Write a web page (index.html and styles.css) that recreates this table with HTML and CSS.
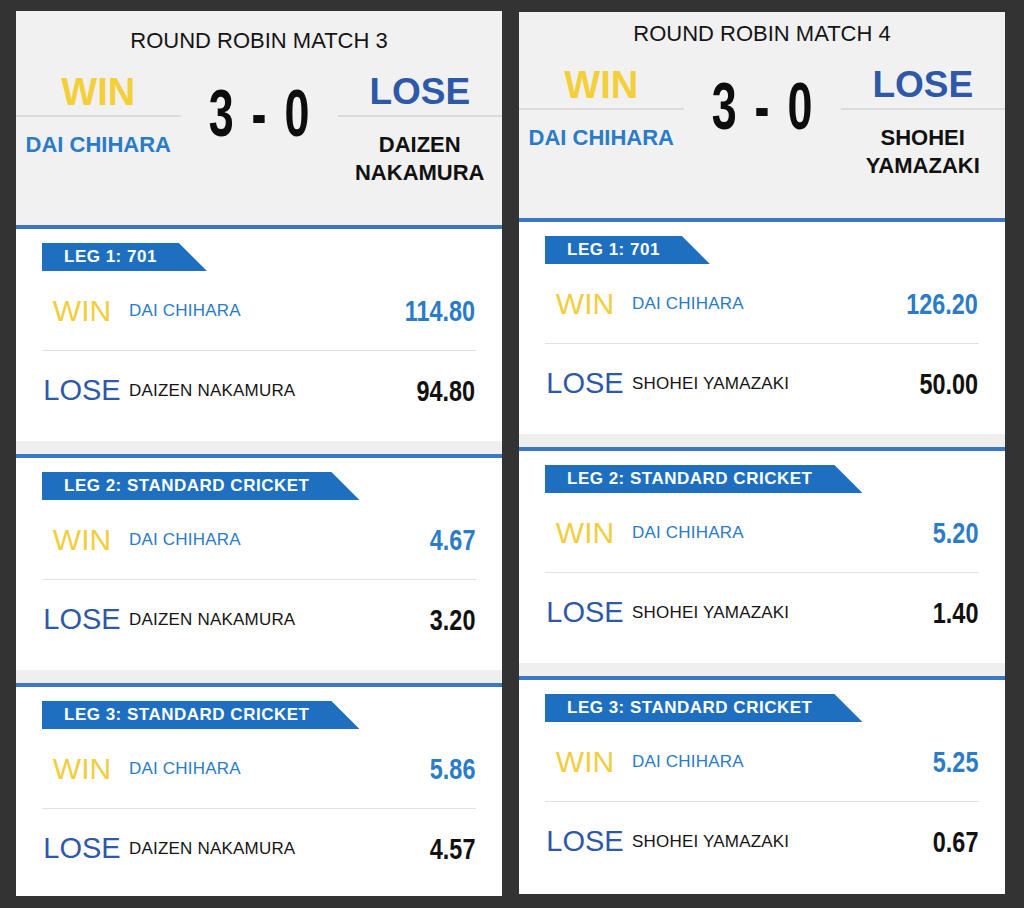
FILE: index.html
```html
<!DOCTYPE html>
<html lang="en">
<head>
<meta charset="utf-8">
<title>Round Robin Results</title>
<link rel="stylesheet" href="styles.css">
</head>
<body>
<main class="page">
  <section class="panel panel-a">
    <header class="match-head">
      <h1 class="match-title">ROUND ROBIN MATCH 3</h1>
      <div class="score-grid">
        <div class="side">
          <div class="result result-win">WIN</div>
          <div class="player player-win">DAI CHIHARA</div>
        </div>
        <div class="score"><span class="score-num">3 - 0</span></div>
        <div class="side">
          <div class="result result-lose">LOSE</div>
          <div class="player player-lose">DAIZEN NAKAMURA</div>
        </div>
      </div>
    </header>
    <article class="leg">
      <div class="leg-tag">LEG 1: 701</div>
      <div class="row">
        <span class="label label-win">WIN</span>
        <span class="name name-win">DAI CHIHARA</span>
        <span class="stat stat-win">114.80</span>
      </div>
      <div class="row">
        <span class="label label-lose">LOSE</span>
        <span class="name name-lose">DAIZEN NAKAMURA</span>
        <span class="stat stat-lose">94.80</span>
      </div>
    </article>
    <article class="leg">
      <div class="leg-tag">LEG 2: STANDARD CRICKET</div>
      <div class="row">
        <span class="label label-win">WIN</span>
        <span class="name name-win">DAI CHIHARA</span>
        <span class="stat stat-win">4.67</span>
      </div>
      <div class="row">
        <span class="label label-lose">LOSE</span>
        <span class="name name-lose">DAIZEN NAKAMURA</span>
        <span class="stat stat-lose">3.20</span>
      </div>
    </article>
    <article class="leg leg-last">
      <div class="leg-tag">LEG 3: STANDARD CRICKET</div>
      <div class="row">
        <span class="label label-win">WIN</span>
        <span class="name name-win">DAI CHIHARA</span>
        <span class="stat stat-win">5.86</span>
      </div>
      <div class="row">
        <span class="label label-lose">LOSE</span>
        <span class="name name-lose">DAIZEN NAKAMURA</span>
        <span class="stat stat-lose">4.57</span>
      </div>
    </article>
  </section>

  <section class="panel panel-b">
    <header class="match-head">
      <h1 class="match-title">ROUND ROBIN MATCH 4</h1>
      <div class="score-grid">
        <div class="side">
          <div class="result result-win">WIN</div>
          <div class="player player-win">DAI CHIHARA</div>
        </div>
        <div class="score"><span class="score-num">3 - 0</span></div>
        <div class="side">
          <div class="result result-lose">LOSE</div>
          <div class="player player-lose">SHOHEI YAMAZAKI</div>
        </div>
      </div>
    </header>
    <article class="leg">
      <div class="leg-tag">LEG 1: 701</div>
      <div class="row">
        <span class="label label-win">WIN</span>
        <span class="name name-win">DAI CHIHARA</span>
        <span class="stat stat-win">126.20</span>
      </div>
      <div class="row">
        <span class="label label-lose">LOSE</span>
        <span class="name name-lose">SHOHEI YAMAZAKI</span>
        <span class="stat stat-lose">50.00</span>
      </div>
    </article>
    <article class="leg">
      <div class="leg-tag">LEG 2: STANDARD CRICKET</div>
      <div class="row">
        <span class="label label-win">WIN</span>
        <span class="name name-win">DAI CHIHARA</span>
        <span class="stat stat-win">5.20</span>
      </div>
      <div class="row">
        <span class="label label-lose">LOSE</span>
        <span class="name name-lose">SHOHEI YAMAZAKI</span>
        <span class="stat stat-lose">1.40</span>
      </div>
    </article>
    <article class="leg leg-last">
      <div class="leg-tag">LEG 3: STANDARD CRICKET</div>
      <div class="row">
        <span class="label label-win">WIN</span>
        <span class="name name-win">DAI CHIHARA</span>
        <span class="stat stat-win">5.25</span>
      </div>
      <div class="row">
        <span class="label label-lose">LOSE</span>
        <span class="name name-lose">SHOHEI YAMAZAKI</span>
        <span class="stat stat-lose">0.67</span>
      </div>
    </article>
  </section>
</main>
</body>
</html>
```

FILE: styles.css
```css
* {
  box-sizing: border-box;
}

html, body {
  margin: 0;
  padding: 0;
  background: #333333;
  font-family: "Liberation Sans", Arial, sans-serif;
  color: #111111;
}

.page {
  display: flex;
  align-items: flex-start;
  gap: 17px;
  padding-left: 16px;
  width: 1024px;
  height: 908px;
  overflow: hidden;
}

.panel {
  width: 486px;
  display: flex;
  flex-direction: column;
  background: #efefef;
  overflow: hidden;
}

.panel-a {
  margin-top: 11px;
  height: 885px;
}

.panel-b {
  margin-top: 12px;
  height: 882px;
}

/* ---------- header ---------- */
.match-head {
  background: #f1f1f1;
  padding-bottom: 38px;
  flex: none;
}

.panel-a .match-head {
  padding-top: 17px;
}

.panel-b .match-head {
  padding-top: 9px;
}

.match-title {
  margin: 0 0 16px;
  font-size: 22px;
  line-height: 26px;
  font-weight: 400;
  text-align: center;
  color: #151515;
}

.score-grid {
  display: grid;
  grid-template-columns: 1fr 157px 1fr;
  align-items: start;
}

.side {
  text-align: center;
}

.result {
  font-size: 38px;
  line-height: 44px;
  font-weight: 700;
  padding-bottom: 1px;
  border-bottom: 2px solid #dcdcdc;
}

.result-win {
  color: #f3cf3a;
}

.result-lose {
  color: #2e58a8;
  font-size: 37px;
}

.player {
  margin-top: 14px;
  font-size: 22px;
  line-height: 28px;
  font-weight: 700;
}

.player-win {
  color: #2a7bc8;
}

.player-lose {
  color: #111111;
  padding: 0 4px;
}

.score {
  text-align: center;
  margin-top: 10px;
}

.score-num {
  display: inline-block;
  font-size: 66px;
  line-height: 66px;
  font-weight: 700;
  letter-spacing: 4px;
  padding-left: 4px;
  color: #0d0d0d;
  transform: scaleX(0.68);
  transform-origin: center center;
  white-space: nowrap;
}

/* ---------- legs ---------- */
.leg {
  flex: none;
  height: 216px;
  background: #ffffff;
  border-top: 4px solid #3a77c5;
  padding: 14px 26px 0;
  margin-bottom: 13px;
}

.leg-last {
  flex: 1 1 auto;
  height: auto;
  margin-bottom: 0;
}

.leg-tag {
  width: fit-content;
  height: 28px;
  padding: 0 50px 0 22px;
  background: #1e6fbf;
  color: #ffffff;
  font-size: 17px;
  line-height: 28px;
  font-weight: 700;
  letter-spacing: 0.5px;
  clip-path: polygon(0 0, calc(100% - 28px) 0, 100% 100%, 0 100%);
}

.row {
  display: flex;
  align-items: center;
  height: 79px;
}

.row + .row {
  height: 80px;
  border-top: 1px solid #e2e2e2;
}

.label {
  flex: none;
  width: 80px;
  text-align: center;
  font-weight: 400;
  line-height: 1;
  margin-right: 7px;
}

.label-win {
  font-size: 30px;
  color: #f2cd3c;
}

.label-lose {
  font-size: 29px;
  color: #2e58a8;
}

.name {
  flex: 1 1 auto;
  font-size: 17px;
  line-height: 1;
  letter-spacing: 0.2px;
}

.name-win {
  color: #2a7bc8;
}

.name-lose {
  color: #151515;
}

.stat {
  flex: none;
  display: inline-block;
  margin-right: 1px;
  font-size: 30px;
  line-height: 1;
  font-weight: 700;
  transform: scaleX(0.78);
  transform-origin: right center;
}

.stat-win {
  color: #2a7bc8;
}

.stat-lose {
  color: #111111;
}
```
